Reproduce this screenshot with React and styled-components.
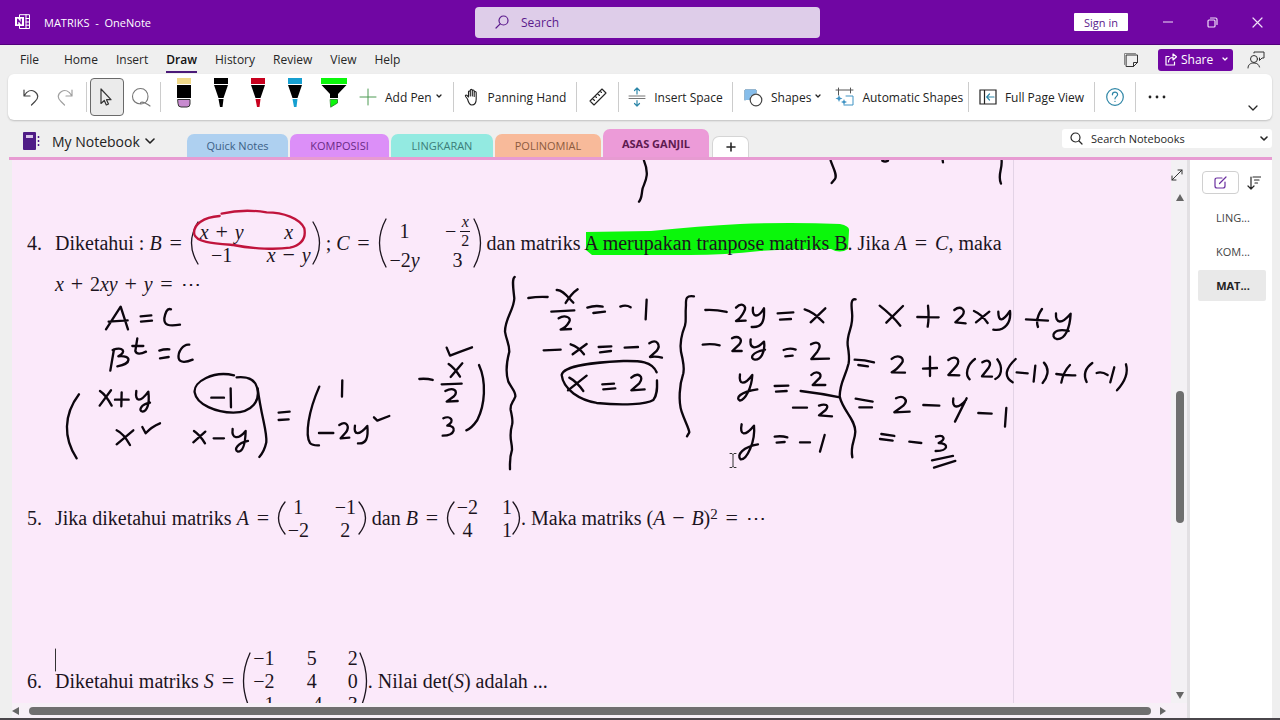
import { useState } from "react";
import styled, { createGlobalStyle, css } from "styled-components";

const GlobalStyle = createGlobalStyle`
    *{
        box-sizing: border-box;
    }
    body{
        margin: 0;
        background: #efefef;
        font-family: "Open Sans", "Noto Sans", sans-serif;
        font-size: 12px;
        color: #262626;
    }
    button, input{
        font: inherit;
        color: inherit;
    }
    button{
        border: 0;
        padding: 0;
        background: none;
        white-space: nowrap;
    }
`

const menus = ["File","Home","Insert","Draw","History","Review","View","Help"]

const sections = [
    {name:"Quick Notes", width:101, color:"#aed0f0", text:"#3c5f86"},
    {name:"KOMPOSISI", width:99, color:"#dc8ff8", text:"#6b2a86"},
    {name:"LINGKARAN", width:102, color:"#93eae1", text:"#3b7d78"},
    {name:"POLINOMIAL", width:106, color:"#f8ba9a", text:"#8c5a3e"},
    {name:"ASAS GANJIL", width:106, color:"#ec9bd8", text:"#5d1a50"},
]

const pages = ["LING...","KOM...","MAT..."]

const pens = [
    {name:"Black pen", color:"#000000"},
    {name:"Red pen", color:"#c8001e"},
    {name:"Blue pen", color:"#169fd0"},
]

// every ink group keeps its own origin, the strokes are stored at 3x
const inkGroups = [
    {x:0, y:155, strokes:[
        "M318 523L362 455L384 523M326 500L383 496",
        "M422 484L454 481M423 500L456 497",
        "M513 463C500 458 496 475 493 490C492 510 505 515 540 509",
        "M342 583L331 647M338 585C368 574 382 590 355 604C396 600 396 626 352 634",
        "M412 550L406 588Q412 603 438 590M397 573L430 573",
        "M478 587Q492 582 508 583M480 610L506 606",
        "M568 569C550 566 533 590 536 610C540 625 560 622 578 614",
        "M237 718C190 780 190 850 230 910",
        "M300 708Q318 720 335 752M333 706L299 752",
        "M345 734L386 734M365 712L364 754",
        "M409 708C404 742 422 742 445 710C450 750 440 768 428 770C414 768 422 748 450 743",
        "M702 661C640 646 580 680 584 712C590 750 650 772 700 773C760 772 780 735 772 700C765 670 740 664 710 667",
        "M634 728L672 728M692 700L693 757",
        "M350 826Q370 835 390 870M400 826L350 868",
        "M427 816L437 835Q455 815 480 805",
        "M582 828Q600 840 615 865M616 830L580 862M641 850L672 850",
        "M698 822C694 852 715 855 737 828C736 870 728 890 714 890C700 885 712 865 744 858",
        "M773 700C785 790 802 830 799 862Q793 890 778 906",
        "M836 773L869 770M836 795L866 793",
        "M958 695C925 770 915 840 930 864Q938 872 957 871",
        "M1027 676L1026 725",
        "M957 834L1000 834M1018 810C1040 795 1050 815 1038 832L1022 850L1048 848",
        "M1065 812C1060 842 1078 842 1102 813C1106 850 1098 868 1074 865",
        "M1122 787L1132 797L1168 783",
    ]},
    {x:390, y:155, strokes:[
        "M762 17C780 60 765 80 758 100C754 120 756 130 747 140",
        "M374 366C365 372 370 400 373 430C372 465 345 490 345 530C350 560 358 565 358 590C350 620 345 650 355 680C365 700 378 710 376 725C368 745 360 745 362 765C370 800 368 800 366 810C355 850 367 860 366 885C358 910 360 920 360 943",
        "M415 429Q445 424 473 426M500 405C520 403 535 430 550 443M563 403Q545 415 527 444",
        "M484 470L553 466M506 490C525 478 545 488 538 500Q528 518 512 524L543 522",
        "M592 458Q615 450 638 455M610 474L645 470M691 455Q708 448 722 457M770 434L767 493",
        "M461 586L512 584M542 568Q565 575 582 598M590 567L548 598M626 576L664 574M630 592L663 588",
        "M704 578L744 576M778 565C800 550 814 570 800 588L780 606Q798 603 816 608",
        "M800 652C785 615 740 618 700 618C620 622 520 630 515 660C520 705 570 735 620 744C700 752 770 748 790 735C802 720 802 700 801 676",
        "M538 668Q560 680 580 708M590 662L534 706M637 688L672 686M640 703L676 700",
        "M724 668C745 650 764 665 748 685L724 706L764 703",
        "M170 578L180 602Q210 590 246 577",
        "M176 627Q195 640 210 665M217 625L182 666M88 672Q110 670 128 675M155 688L215 686",
        "M166 708C190 695 207 708 192 724L170 740L203 738",
        "M160 790C180 780 198 798 172 812C202 812 197 842 158 842",
        "M267 630C290 680 285 750 262 795Q245 820 229 826",
        "M912 424C890 420 887 430 888 450C885 490 890 495 885 512C870 550 870 570 873 590C885 640 882 645 880 655C868 690 865 740 875 770C885 800 897 820 898 832L891 844",
    ]},
    {x:680, y:155, strokes:[
        "M452 17C462 45 472 60 465 72L455 84M607 17Q615 22 624 17M788 15L789 22M965 17C967 45 952 60 963 86",
        "M76 465Q105 463 140 471M168 458C185 440 202 452 192 470Q182 490 168 498L197 497",
        "M219 458C215 488 235 490 252 460C254 500 247 518 215 516",
        "M293 475L340 472M300 494L333 492M374 463Q400 470 430 502M436 460L392 502",
        "M68 569Q95 565 119 571M156 550C175 540 190 552 178 568L157 588L185 588",
        "M212 553C208 582 228 585 252 560C257 595 240 615 225 614C208 610 215 592 255 584",
        "M311 585Q330 577 347 584M316 604L338 602M393 568C415 555 427 570 412 590L394 612L447 611",
        "M180 658C175 692 195 690 217 660C215 700 195 735 180 737C165 730 180 710 232 703",
        "M284 693L325 692M288 710L320 708M394 660C410 645 427 655 420 668L398 690L436 690",
        "M362 708Q420 715 480 727M339 758L381 758M417 752C435 745 450 750 437 765L417 781L456 784",
        "M185 808C178 842 195 845 222 812C227 860 200 915 182 913C168 900 190 875 234 868",
        "M284 845Q305 842 322 847M290 863L314 861M360 862L390 862M434 840L420 890",
        "M527 433C512 430 514 450 516 470C522 520 500 530 503 570C508 600 508 615 506 625C495 670 480 680 479 725C490 770 525 790 526 830C525 860 510 870 517 907",
    ]},
    {x:840, y:155, strokes:[
        "M119 452Q155 480 181 512M189 453L139 503M232 486L296 487M264 452Q268 490 263 515",
        "M343 465C362 450 380 465 367 482L346 502L377 505M402 468Q425 478 443 504M448 470L408 502",
        "M475 470C475 502 488 500 510 468C514 502 495 530 460 524M558 493L624 497M606 462C590 485 588 500 594 516",
        "M648 475C646 507 665 508 692 476C690 520 675 555 650 552C630 545 640 518 686 528",
        "M44 614Q75 614 102 622M55 630L84 634M155 612C175 595 197 610 185 625Q170 645 155 652L195 653",
        "M249 641L291 639M270 605L270 663M325 615C345 600 364 612 350 632L325 660L358 661",
        "M405 612C380 630 375 660 389 673M427 622C445 610 457 622 445 640L426 664L456 665M472 613C492 640 482 665 466 672",
        "M527 612C497 640 490 665 518 682M530 652L563 655M586 632L581 680M612 623C632 645 620 670 608 684",
        "M649 657Q680 662 706 661M690 630Q670 650 664 683M757 624C735 640 730 660 740 681",
        "M770 654Q785 648 803 660M823 637L811 682M858 628C866 655 850 685 831 706",
        "M47 731L98 740M58 757L96 757M168 730C190 718 207 735 190 752L163 772L209 770",
        "M250 750L298 752M340 730C335 762 355 762 378 735M380 730L345 800M415 774L455 776M499 759L495 815",
        "M124 837L163 843M120 852L158 857M208 860L244 864",
        "M288 845C312 838 320 852 296 864C327 865 327 888 287 888M276 916L339 903M282 938L346 918",
    ]},
]

const redCircle = "M659 183C610 186 578 210 583 238C590 262 640 265 700 270C760 282 830 284 870 278C910 268 918 245 913 220C900 190 850 172 800 172C750 164 700 168 665 176"

/* ---------- shell ---------- */

const Shell = styled.div`
    display: flex;
    flex-direction: column;
    height: 100vh;
    min-height: 480px;
    overflow: hidden;
    border-bottom: 2px solid #4a464b;
`
const TitleBar = styled.header`
    display: grid;
    grid-template-columns: 475px minmax(0, 1fr) 460px;
    align-items: center;
    flex: none;
    height: 45px;
    background: #7006a3;
    border-bottom: 1px solid #52007c;
    color: #ffffff;
`
const AppName = styled.div`
    display: flex;
    align-items: center;
    gap: 13px;
    padding-left: 15px;
    font-size: 11px;
    white-space: pre;
`
const TitleSearch = styled.label`
    display: flex;
    align-items: center;
    gap: 12px;
    height: 31px;
    padding: 0 20px;
    border-radius: 4px;
    background: #decde9;
    color: #5b1a8c;
`
const SearchInput = styled.input`
    flex: 1;
    min-width: 0;
    padding: 0;
    border: 0;
    outline: 0;
    background: none;
    font-size: ${(props)=>props.$size}px;
    &::placeholder{
        color: inherit;
        opacity: 1;
    }
`
const WindowActions = styled.div`
    display: flex;
    align-items: center;
    justify-content: flex-end;
    height: 100%;
`
const SignIn = styled.button`
    width: 54px;
    height: 18px;
    margin-right: 17px;
    background: #ffffff;
    border-radius: 1px;
    font-size: 11px;
    color: #5b1a8c;
`
const WindowButton = styled.button`
    display: grid;
    place-items: center;
    width: 45px;
    height: 100%;
    color: #f0e0f8;
`
const MenuBar = styled.nav`
    display: flex;
    align-items: center;
    flex: none;
    height: 29px;
    padding: 0 15px 0 11px;
`
const MenuItem = styled.button`
    height: 26px;
    padding: 2px 0 0;
    margin: 0 9px;
    border-bottom: 2px solid transparent;
    &:first-child{
        margin-right: 16px;
    }
    ${(props)=>props.$active && css`
        font-weight: 600;
        color: #111111;
        border-bottom-color: #4b1a78;
    `}
`
const MenuRight = styled.div`
    display: flex;
    align-items: center;
    gap: 14px;
    margin-left: auto;
`
const IconButton = styled.button`
    display: grid;
    place-items: center;
`
const ShareButton = styled.button`
    display: flex;
    align-items: center;
    gap: 4px;
    width: 75px;
    height: 22px;
    margin-left: 5px;
    padding: 0 5px 0 7px;
    border-radius: 3px;
    background: #7006a3;
    color: #ffffff;
    svg:last-child{
        margin-left: auto;
    }
`
const Ribbon = styled.div`
    display: flex;
    align-items: center;
    flex: none;
    height: 46px;
    margin: 0 8px;
    border-radius: 6px;
    background: #ffffff;
    box-shadow: 0 1px 2px rgba(0, 0, 0, 0.2);
`
const Group = styled.div`
    display: flex;
    align-items: center;
    justify-content: ${(props)=>props.$justify || "center"};
    flex: none;
    width: ${(props)=>props.$width}px;
    height: 30px;
    padding-left: ${(props)=>props.$indent || 0}px;
    border-right: 1px solid #cccccc;
    &:last-of-type{
        border-right: 0;
    }
`
const Tool = styled.button`
    display: grid;
    place-items: center;
    width: 34px;
    height: 38px;
    border-radius: 4px;
    ${(props)=>props.$active && css`
        background: #ebebeb;
        border: 1px solid #6a6a6a;
    `}
`
const PenButton = styled.button`
    display: grid;
    place-items: center;
    width: ${(props)=>props.$wide ? 42 : 37}px;
    height: 38px;
    padding-bottom: 8px;
`
const Command = styled.button`
    display: flex;
    align-items: center;
    gap: 8px;
    margin-right: ${(props)=>props.$after || 0}px;
    color: #222222;
    span{
        display: flex;
        align-items: center;
        gap: 4px;
    }
`
const RibbonToggle = styled.button`
    align-self: flex-end;
    margin: 0 14px 5px auto;
`
const SectionBar = styled.div`
    display: flex;
    align-items: flex-end;
    flex: none;
    height: 40px;
    margin: 0 8px 0 9px;
    border-bottom: 3px solid #e79bd2;
`
const NotebookButton = styled.button`
    display: flex;
    align-items: center;
    gap: 12px;
    width: 178px;
    height: 32px;
    padding-left: 14px;
    font-size: 14px;
    color: #222222;
    span{
        display: flex;
        align-items: center;
        gap: 5px;
    }
`
const Sections = styled.div`
    display: flex;
    align-items: flex-end;
    gap: 2px;
`
const SectionTab = styled.button`
    width: ${(props)=>props.$width}px;
    height: ${(props)=>props.$active ? 28 : 23}px;
    border-radius: 7px 7px 0 0;
    background: ${(props)=>props.$color};
    color: ${(props)=>props.$text};
    font-size: 11px;
    font-weight: ${(props)=>props.$active ? 700 : 400};
`
const AddSection = styled.button`
    display: grid;
    place-items: center;
    width: 37px;
    height: 21px;
    margin-left: 1px;
    border: 1px solid #d5d5d5;
    border-bottom: 0;
    border-radius: 7px 7px 0 0;
    background: #ffffff;
`
const NotebookSearch = styled.label`
    display: flex;
    align-items: center;
    gap: 8px;
    align-self: flex-start;
    width: 210px;
    height: 19px;
    margin: 9px 0 0 auto;
    padding: 0 4px 0 8px;
    border-radius: 3px;
    background: #ffffff;
`
const Workspace = styled.main`
    display: flex;
    flex: 1;
    min-height: 0;
    margin: 0 8px 0 12px;
`
const NoteArea = styled.section`
    display: grid;
    grid-template-columns: minmax(0, 1fr) 16px;
    grid-template-rows: minmax(0, 1fr) 15px;
    flex: 1;
    min-width: 0;
    background: #fbe9fa;
`
const Canvas = styled.div`
    position: relative;
    overflow: hidden;
`
const Page = styled.article`
    display: grid;
    grid-template-rows: 280px 152px auto;
    width: 1002px;
    min-height: 100%;
    padding: 54px 0 0 15px;
    border-right: 1px solid #e3d3e6;
    font-family: "Liberation Serif", serif;
    font-size: 20px;
    line-height: 24px;
    color: #1c141e;
`
const InkLayer = styled.svg`
    position: absolute;
    top: 0;
    left: 0;
    fill: none;
    stroke: #0c060e;
    stroke-width: 7;
    stroke-linecap: round;
    stroke-linejoin: round;
    pointer-events: none;
`
const HighlightLayer = styled(InkLayer)`
    z-index: -1;
    fill: #0bf70b;
    stroke: none;
`

/* ---------- math ---------- */

const Problem = styled.div`
    position: relative;
    isolation: isolate;
    display: grid;
    grid-template-columns: 28px minmax(0, 1fr);
    grid-auto-rows: max-content;
`
const ProblemNumber = styled.span`
    align-self: center;
`
const Line = styled.div`
    grid-column: 2;
    display: flex;
    align-items: center;
    min-height: ${(props)=>props.$height || 24}px;
    white-space: pre;
`
const Operator = styled.span`
    width: ${(props)=>props.$tight ? 26 : 28}px;
    font-size: 22px;
    text-align: center;
`
const MatrixBox = styled.span`
    display: flex;
    align-items: center;
`
const Cells = styled.span`
    display: grid;
    grid-template-columns: ${(props)=>props.$columns};
    grid-template-rows: ${(props)=>props.$rows};
    column-gap: ${(props)=>props.$gap}px;
    place-items: center;
`
const Cell = styled.span`
    display: flex;
    align-items: center;
`
const Fraction = styled.span`
    display: flex;
    flex-direction: column;
    align-items: center;
    width: 10px;
    margin-left: 4px;
    font-size: 16px;
    line-height: 18px;
    i{
        width: 100%;
        text-align: center;
        border-bottom: 1px solid #1c141e;
    }
`
const Sup = styled.sup`
    align-self: flex-start;
    font-size: 15px;
    line-height: 40px;
`

/* ---------- scrollbars and page list ---------- */

const VScroll = styled.div`
    display: grid;
    grid-template-rows: 31px 200px 132px 1fr 16px;
    justify-items: center;
    align-items: end;
    padding-right: 2px;
    background: #f3f1f4;
`
const FullPage = styled(IconButton)`
    align-self: start;
    margin: 9px 6px 0 0;
`
const VThumb = styled.div`
    grid-row: 3;
    width: 8px;
    height: 100%;
    border-radius: 4px;
    background: #6f6f6f;
`
const HScroll = styled.div`
    grid-column: 1 / -1;
    display: flex;
    align-items: center;
    gap: 9px;
    padding-right: 20px;
    background: #f7f0f7;
`
const HThumb = styled.div`
    flex: 1;
    height: 8px;
    border-radius: 4px;
    background: #6f6f6f;
`
const Arrow = styled.svg`
    flex: none;
    align-self: ${(props)=>props.$align || "center"};
    grid-row: ${(props)=>props.$row || "auto"};
    fill: #666666;
`
const PageList = styled.aside`
    flex: none;
    width: 85px;
    padding: 11px 5px 0 8px;
    border-left: 3px solid #e2e0e3;
    background: #ffffff;
`
const PageActions = styled.div`
    display: flex;
    align-items: center;
    gap: 8px;
    margin: 0 0 8px 4px;
`
const AddPage = styled.button`
    display: grid;
    place-items: center;
    width: 37px;
    height: 23px;
    border: 1px solid #d0d0d0;
    border-radius: 4px;
`
const PageItem = styled.button`
    display: block;
    width: 68px;
    height: 31px;
    margin-bottom: 3px;
    padding-left: 2px;
    border-radius: 2px;
    font-size: 11px;
    color: #444444;
    ${(props)=>props.$active && css`
        background: #e9e9e9;
        font-weight: 700;
        color: #222222;
    `}
`

function Icon({width=20,height=20,children,...rest}){
    return <svg width={width} height={height} viewBox={`0 0 ${width} ${height}`} fill="none" stroke="currentColor" strokeLinecap="round" strokeLinejoin="round" aria-hidden="true" {...rest}>{children}</svg>
}

function Chevron({width=8,weight=1.3}){
    return <Icon width={width} height={6} strokeWidth={weight}><path d={`M1 1L${width/2} ${width/2}L${width-1} 1`}/></Icon>
}

function Pen({color}){
    return (
        <Icon width={16} height={30} stroke="none">
            <path d="M1 0H15V6H1Z" fill={color}/>
            <path d="M1 7H15L10.500 20H5.500Z" fill="#000000"/>
            <path d="M5.500 21H10.500L9.500 29H7Z" fill={color}/>
        </Icon>
    )
}

function Paren({height,right}){
    const h = height
    return (
        <Icon width={9} height={h} strokeWidth="1.300">
            {right ? <path d={`M1 1Q14 ${h/2} 1 ${h-1}`}/> : <path d={`M8 1Q-5 ${h/2} 8 ${h-1}`}/>}
        </Icon>
    )
}

function Matrix({height,columns,rows,gap,children}){
    return (
        <MatrixBox>
            <Paren height={height}/>
            <Cells $columns={columns} $rows={rows} $gap={gap}>{children}</Cells>
            <Paren height={height} right/>
        </MatrixBox>
    )
}

function TitleSection(){
    return (
        <TitleBar>
            <AppName>
                <Icon width={16} height={16}>
                    <path d="M4.500 3V.700H14.500V14.500H4.500V12M11 .700V14.500M11 4.500H14.500M11 8H14.500M11 11.200H14.500"/>
                    <rect x="0" y="3" width="9" height="9" fill="#ffffff" stroke="none"/>
                    <path d="M2.700 9.800V5.200L6.300 9.800V5.200" stroke="#7006a3" strokeWidth="1.300"/>
                </Icon>
                <span>MATRIKS  -  OneNote</span>
            </AppName>
            <TitleSearch>
                <Icon width={14} height={14} strokeWidth="1.200"><circle cx="8.500" cy="5.500" r="4.500"/><path d="M5.200 8.800L1 13"/></Icon>
                <SearchInput $size={12} type="text" placeholder="Search" aria-label="Search"/>
            </TitleSearch>
            <WindowActions>
                <SignIn>Sign in</SignIn>
                <WindowButton aria-label="Minimize"><Icon width={10} height={10} strokeWidth="1.200"><path d="M.5 5H9.500"/></Icon></WindowButton>
                <WindowButton aria-label="Restore"><Icon width={11} height={11} strokeWidth="1.200"><rect x="1" y="3" width="7" height="7" rx="1"/><path d="M3.500 1H8.500Q10 1 10 2.500V7.500"/></Icon></WindowButton>
                <WindowButton aria-label="Close"><Icon width={11} height={11} strokeWidth="1.200"><path d="M1 1L10 10M10 1L1 10"/></Icon></WindowButton>
            </WindowActions>
        </TitleBar>
    )
}

function RibbonSection(){
    return (
        <Ribbon>
            <Group $width={79} $justify="flex-start" $indent={6}>
                <Tool aria-label="Undo"><Icon><path d="M3 3V9H9M3.300 8.700C6 4 10 2.500 13.500 4.500C18 7.500 17.500 11.500 14 14.500L10.500 18" stroke="#444444" strokeWidth="1.200"/></Icon></Tool>
                <Tool aria-label="Redo"><Icon><path d="M17 3V9H11M16.700 8.700C14 4 10 2.500 6.500 4.500C2 7.500 2.500 11.500 6 14.500L9.500 18" stroke="#a0a0a0" strokeWidth="1.200"/></Icon></Tool>
            </Group>
            <Group $width={74}>
                <Tool $active aria-label="Select"><Icon><path d="M4 2V16.500L7.300 13.500L9.300 18L11.500 17L9.500 12.700H14Z" stroke="#333333" strokeWidth="1.200"/></Icon></Tool>
                <Tool aria-label="Lasso select"><Icon><path d="M10 17C4.500 17 1.500 13.500 1.500 9.500C1.500 5 5 1.500 9.500 1.500C14 1.500 17 5 17 9.500C17 13.500 14.500 17 10 17C8.500 15 11 14.500 14 16C16 17 18 18 19 19" stroke="#777777" strokeWidth="1.100"/></Icon></Tool>
            </Group>
            <Group $width={293} $justify="flex-start" $indent={4}>
                <PenButton aria-label="Eraser">
                    <Icon width={16} height={30} stroke="none">
                        <path d="M1 0H15V6H1Z" fill="#f0d98a"/>
                        <path d="M1 7H15V20H1Z" fill="#000000"/>
                        <path d="M2 21.500H14V26Q14 29 11 29H5Q2 29 2 26Z" fill="#c88bd0" stroke="#333333"/>
                    </Icon>
                </PenButton>
                {pens.map((pen)=><PenButton key={pen.name} aria-label={pen.name}><Pen color={pen.color}/></PenButton>)}
                <PenButton $wide aria-label="Green highlighter">
                    <Icon width={28} height={30} stroke="none">
                        <path d="M1 0H27V6H1Z" fill="#0bf70b"/>
                        <path d="M1.500 7H26.500L18 16V20H10V16Z" fill="#000000"/>
                        <path d="M10.500 21.500H17.500V25L11 29Z" fill="#0bf70b" stroke="#1c7a1c" strokeWidth=".8"/>
                    </Icon>
                </PenButton>
                <Group as="span" $width={4}/>
                <Command>
                    <Icon width={18} height={18} stroke="#4c9a52"><path d="M9 1V17M1 9H17"/></Icon>
                    <span>Add Pen <Chevron width={6}/></span>
                </Command>
            </Group>
            <Group $width={123}>
                <Command>
                    <Icon width={16} height={18} strokeWidth="1.100"><path d="M3.500 11L1.600 8.500C1 7.500 2 6.600 3 7.400L4.500 9V4C4.500 2.600 6.300 2.600 6.300 4V8V2.500C6.300 1 8.300 1 8.300 2.500V8V3C8.300 1.600 10.200 1.600 10.200 3V8.500V4.500C10.200 3.200 12.200 3.200 12.200 4.500V11C12.200 15 10.800 17 7.800 17C5.200 17 4.300 14 3.500 11Z"/></Icon>
                    <span>Panning Hand</span>
                </Command>
            </Group>
            <Group $width={42}>
                <IconButton aria-label="Ruler"><Icon strokeWidth="1.100"><path d="M2 14L14 2L18 6L6 18ZM4.500 11.500L6.500 13.500M7 9L8.500 10.500M9.500 6.500L11.500 8.500M12 4L13.500 5.500"/></Icon></IconButton>
            </Group>
            <Group $width={114}>
                <Command>
                    <Icon width={18} height={20}><path d="M1 9H17M1 11.500H17" stroke="#777777"/><path d="M9 7V1M6.500 3.500L9 1L11.500 3.500M9 13.500V19M6.500 16.500L9 19L11.500 16.500" stroke="#2c86a8" strokeWidth="1.200"/></Icon>
                    <span>Insert Space</span>
                </Command>
            </Group>
            <Group $width={236} $justify="flex-start" $indent={11}>
                <Command $after={14}>
                    <Icon width={19} height={19}><path d="M1 12V2H12V5" fill="#86bdea" stroke="#2f6fa0"/><path d="M1 12H6V7L12 5V2H1Z" fill="#86bdea" stroke="none"/><circle cx="12" cy="12" r="5.800" fill="#ffffff" stroke="#444444" strokeWidth="1.200"/></Icon>
                    <span>Shapes <Chevron width={6}/></span>
                </Command>
                <Command>
                    <Icon width={19} height={20}><path d="M1 3H18M3.500 1V8M15.500 1V6" stroke="#555555"/><path d="M11 9H18V18H9" stroke="#3f93c4"/><path d="M4 8L5 10.500L7.500 11.500L5 12.500L4 15L3 12.500L.5 11.500L3 10.500ZM9 12L9.800 14L12 15L9.800 16L9 18.500L8.200 16L6 15L8.200 14Z" fill="#3f93c4" stroke="none"/></Icon>
                    <span>Automatic Shapes</span>
                </Command>
            </Group>
            <Group $width={126}>
                <Command>
                    <Icon width={18} height={18} strokeLinejoin="miter"><path d="M1 2H17V16H1ZM5.500 2V16" stroke="#222222" strokeWidth="1.200"/><path d="M15 9H8M10.500 6L7.700 9L10.500 12" stroke="#2c86a8" strokeWidth="1.200"/></Icon>
                    <span>Full Page View</span>
                </Command>
            </Group>
            <Group $width={41}>
                <IconButton aria-label="Help"><Icon stroke="#2f86a6" strokeWidth="1.200"><circle cx="10" cy="10" r="8.300"/><path d="M7.400 7.800C7.400 4.300 12.600 4.300 12.600 7.500C12.600 9.500 10 9.800 10 11.800M10 14.300V14.500"/></Icon></IconButton>
            </Group>
            <Group $width={41}>
                <IconButton aria-label="More commands"><Icon fill="#222222" stroke="none"><circle cx="3" cy="10" r="1.400"/><circle cx="10" cy="10" r="1.400"/><circle cx="17" cy="10" r="1.400"/></Icon></IconButton>
            </Group>
            <RibbonToggle aria-label="Collapse ribbon"><Chevron width={10}/></RibbonToggle>
        </Ribbon>
    )
}

function NotePage(){
    return (
        <Page>
            <Problem>
                <HighlightLayer width="900" height="110" viewBox="27 214 900 110">
                    <path d="M586 232L651 231Q700 226 740 224Q790 222 840 224Q850 226 849 231L848 249Q840 254 831 249Q790 249 760 251Q725 255 690 255L592 255L586 250Z"/>
                </HighlightLayer>
                <ProblemNumber>4.</ProblemNumber>
                <Line $height={58}>
                    <span>Diketahui : </span><i>B</i><Operator>=</Operator>
                    <Matrix height={44} columns="46px 46px" rows="23px 23px" gap={21}>
                        <Cell><i>x</i><Operator $tight>+</Operator><i>y</i></Cell>
                        <Cell><i>x</i></Cell>
                        <Cell>−1</Cell>
                        <Cell><i>x</i><Operator $tight>−</Operator><i>y</i></Cell>
                    </Matrix>
                    <span> ; </span><i>C</i><Operator>=</Operator>
                    <Matrix height={50} columns="36px 30px" rows="34px 24px" gap={20}>
                        <Cell>1</Cell>
                        <Cell>−<Fraction><i>x</i><span>2</span></Fraction></Cell>
                        <Cell>−2<i>y</i></Cell>
                        <Cell>3</Cell>
                    </Matrix>
                    <span> dan matriks A merupakan tranpose matriks B. Jika </span><i>A</i><Operator>=</Operator><i>C</i>, maka
                </Line>
                <Line>
                    <i>x</i><Operator $tight>+</Operator>2<i>xy</i><Operator $tight>+</Operator><i>y</i><Operator>=</Operator>⋯
                </Line>
            </Problem>
            <Problem>
                <ProblemNumber>5.</ProblemNumber>
                <Line $height={48}>
                    <span>Jika diketahui matriks </span><i>A</i><Operator>=</Operator>
                    <Matrix height={34} columns="25px 25px" rows="23px 23px" gap={22}>
                        <Cell>1</Cell><Cell>−1</Cell>
                        <Cell>−2</Cell><Cell>2</Cell>
                    </Matrix>
                    <span> dan </span><i>B</i><Operator>=</Operator>
                    <Matrix height={34} columns="25px 10px" rows="23px 23px" gap={22}>
                        <Cell>−2</Cell><Cell>1</Cell>
                        <Cell>4</Cell><Cell>1</Cell>
                    </Matrix>
                    <span>. Maka matriks </span>(<i>A</i><Operator $tight>−</Operator><i>B</i>)<Sup>2</Sup><Operator>=</Operator>⋯
                </Line>
            </Problem>
            <Problem>
                <ProblemNumber>6.</ProblemNumber>
                <Line $height={69}>
                    <span>Diketahui matriks </span><i>S</i><Operator>=</Operator>
                    <Matrix height={58} columns="26px 22px 12px" rows="23px 23px 23px" gap={24}>
                        <Cell>−1</Cell><Cell>5</Cell><Cell>2</Cell>
                        <Cell>−2</Cell><Cell>4</Cell><Cell>0</Cell>
                        <Cell>−1</Cell><Cell>−4</Cell><Cell>3</Cell>
                    </Matrix>
                    <span>. Nilai det(</span><i>S</i><span>) adalah ...</span>
                </Line>
            </Problem>
        </Page>
    )
}

function Ink(){
    return (
        <InkLayer width="1155" height="543" viewBox="12 160 1155 543" aria-hidden="true">
            {inkGroups.map((group)=>(
                <g key={group.x} transform={`translate(${group.x} ${group.y}) scale(.3333)`}>
                    {group.strokes.map((stroke)=><path key={stroke} d={stroke}/>)}
                </g>
            ))}
            <path d={redCircle} transform="translate(0 155) scale(.3333)" stroke="#c0143c"/>
            {/* text caret and mouse I-beam */}
            <path d="M55.500 649V671" stroke="#333333" strokeWidth="1"/>
            <path d="M730 453.500H732L733 454.500L734 453.500H736M733 454.500V466.500M730 467.500H732L733 466.500L734 467.500H736" stroke="#333333" strokeWidth="1"/>
        </InkLayer>
    )
}

function App(){
    const [menu,setMenu] = useState("Draw")
    const [section,setSection] = useState("ASAS GANJIL")
    const [page,setPage] = useState("MAT...")

    return (
        <Shell>
            <GlobalStyle/>
            <TitleSection/>
            <MenuBar>
                {menus.map((name)=><MenuItem key={name} $active={menu===name} onClick={()=>setMenu(name)}>{name}</MenuItem>)}
                <MenuRight>
                    <IconButton aria-label="Feed"><Icon width={16} height={16}><path d="M3.500 3H14.500V10.500L10.500 14.500H3.500ZM14.500 10.500H10.500V14.500" stroke="#333333"/><path d="M1.500 12.500V1.500H12.500" stroke="#888888"/></Icon></IconButton>
                    <ShareButton>
                        <Icon width={12} height={13} strokeWidth="1.200"><path d="M4 3.500H1V12H9.500V9M3.500 9C3.500 6 5.500 4.500 8 4.500V7L11.500 3.800L8 1V3.200"/></Icon>
                        Share
                        <Chevron width={6}/>
                    </ShareButton>
                    <IconButton aria-label="Account"><Icon width={18} height={18} stroke="#333333"><circle cx="7" cy="8" r="3.500"/><path d="M1 17C1 13.500 3.500 12 7 12C10.500 12 12 14 12.500 16M7 2V1H17V7H15L12.500 9.500V7"/></Icon></IconButton>
                </MenuRight>
            </MenuBar>
            <RibbonSection/>
            <SectionBar>
                <NotebookButton>
                    <Icon width={17} height={19} stroke="none"><rect x="0" y="0" width="13" height="18" rx="1" fill="#4f1c86"/><path d="M3 3H10V6H3Z" fill="#d9c6ea"/><path d="M15.500 4V15" stroke="#4f1c86" strokeWidth="1.500" strokeDasharray="2 2" strokeLinecap="butt"/></Icon>
                    <span>My Notebook <Chevron width={10} weight={1.6}/></span>
                </NotebookButton>
                <Sections>
                    {sections.map((item)=>(
                        <SectionTab key={item.name} $width={item.width} $color={item.color} $text={item.text} $active={section===item.name} onClick={()=>setSection(item.name)}>{item.name}</SectionTab>
                    ))}
                    <AddSection aria-label="Add section"><Icon width={10} height={10} strokeWidth="1.600"><path d="M5 1V9M1 5H9"/></Icon></AddSection>
                </Sections>
                <NotebookSearch>
                    <Icon width={13} height={13} strokeWidth="1.200"><circle cx="5.500" cy="5.500" r="4.500"/><path d="M9 9L12 12"/></Icon>
                    <SearchInput $size={11} type="text" placeholder="Search Notebooks" aria-label="Search Notebooks"/>
                    <Chevron width={8} weight={1.6}/>
                </NotebookSearch>
            </SectionBar>
            <Workspace>
                <NoteArea>
                    <Canvas>
                        <NotePage/>
                        <Ink/>
                    </Canvas>
                    <VScroll>
                        <FullPage aria-label="Full page view"><Icon width={12} height={12} stroke="#333333"><path d="M1 11L11 1M7 1H11V5M1 7V11H5"/></Icon></FullPage>
                        <Arrow $row={2} $align="start" width="8" height="20"><path d="M0 10L4 3L8 10Z"/></Arrow>
                        <VThumb/>
                        <Arrow $row={5} $align="end" width="8" height="14"><path d="M0 3H8L4 10Z"/></Arrow>
                    </VScroll>
                    <HScroll>
                        <Arrow width="8" height="8"><path d="M7 0V8L0 4Z"/></Arrow>
                        <HThumb/>
                        <Arrow width="7" height="8"><path d="M0 0V8L6 4Z"/></Arrow>
                    </HScroll>
                </NoteArea>
                <PageList>
                    <PageActions>
                        <AddPage aria-label="Add page"><Icon width={13} height={13} stroke="#6b2fa0" strokeWidth="1.200"><path d="M8 2H3Q1 2 1 4V10Q1 12 3 12H9Q11 12 11 10V6M5.500 7.500L12 1"/></Icon></AddPage>
                        <IconButton aria-label="Sort pages"><Icon width={14} height={14} strokeWidth="1.200"><path d="M4 1V13M1 10L4 13L7 10M6 1H13.500M7.500 4H12M8 7H10.500"/></Icon></IconButton>
                    </PageActions>
                    {pages.map((name)=><PageItem key={name} $active={page===name} onClick={()=>setPage(name)}>{name}</PageItem>)}
                </PageList>
            </Workspace>
        </Shell>
    )
}

export default App;
